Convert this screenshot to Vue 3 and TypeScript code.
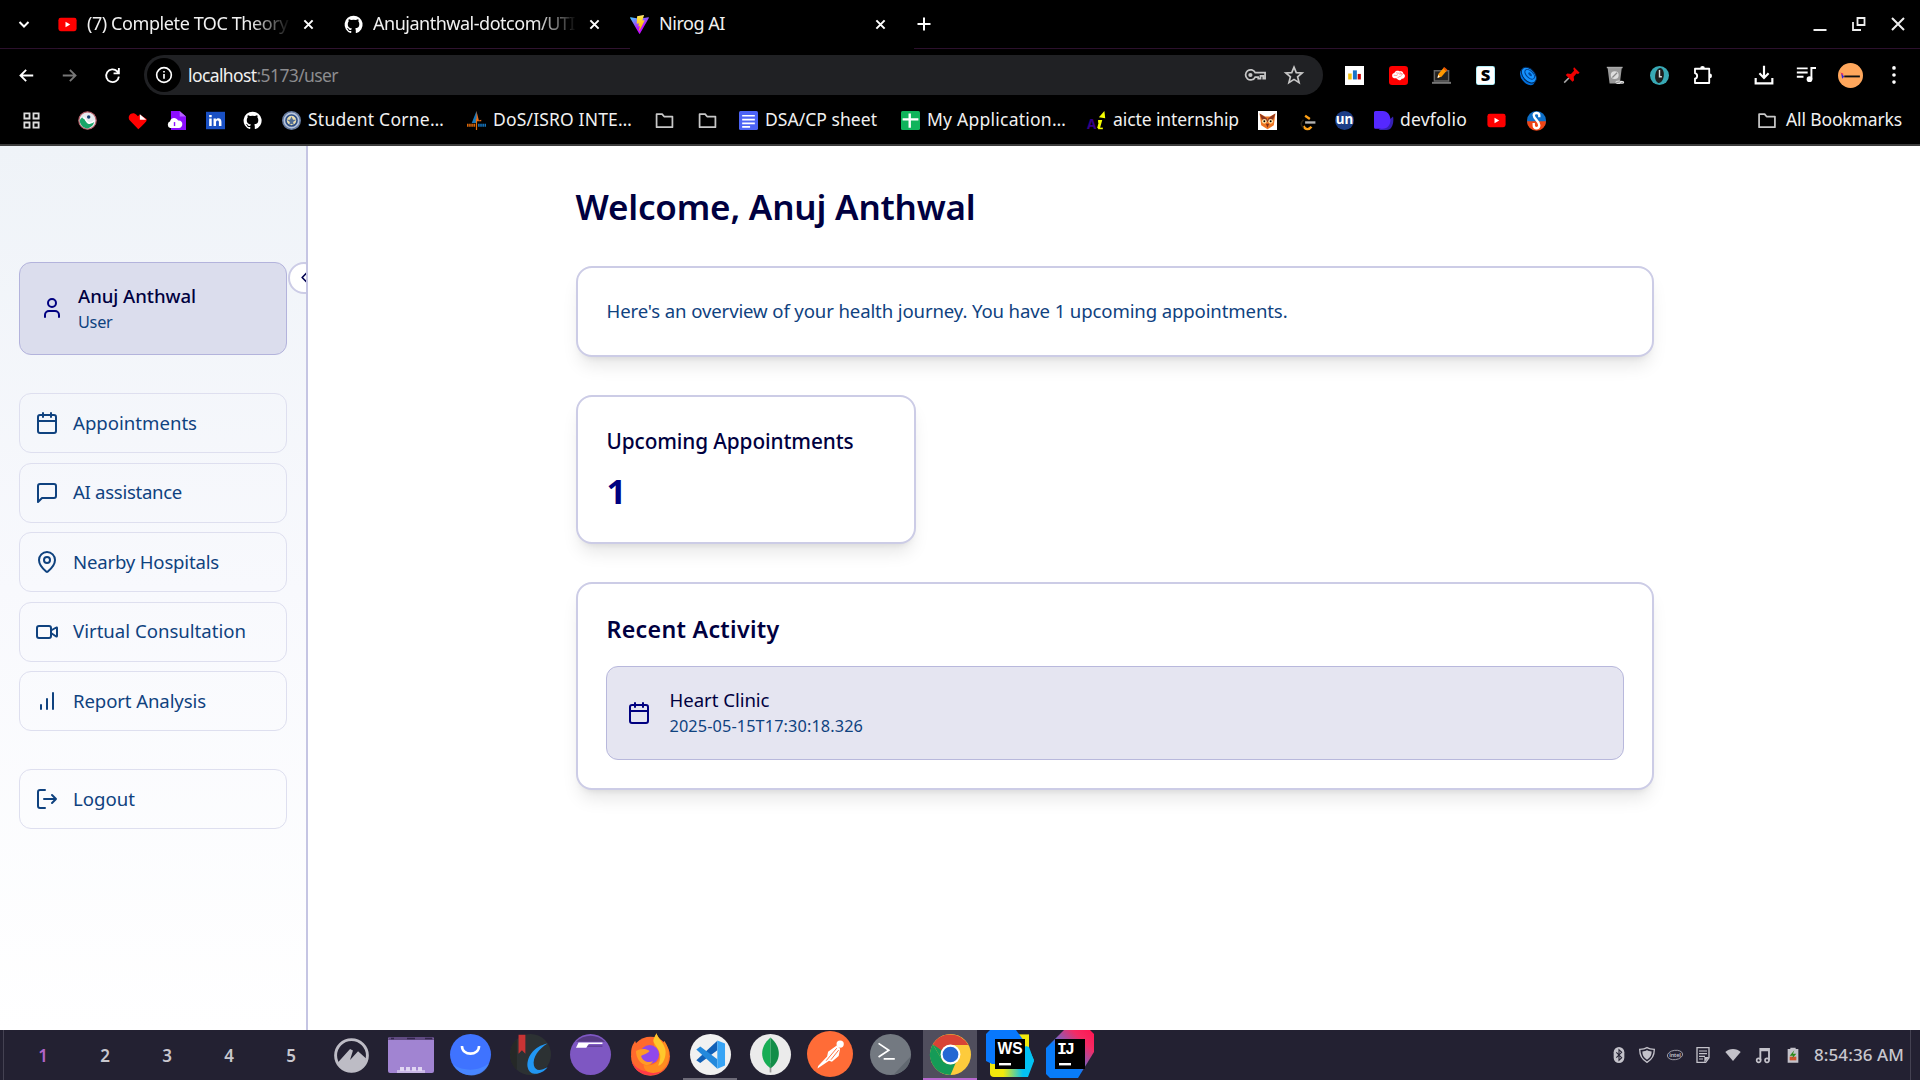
<script setup lang="ts">
interface Bookmark { icon: string; width: number; text?: string; fit?: number }
interface NavItem { icon: string; text: string; fit: number }

// Spreads the letters of a label over a given width in pixels.
const vFit = {
  mounted(el: HTMLElement, binding: { value: number }) {
    const count = (el.textContent || '').length
    const natural = el.getBoundingClientRect().width
    if (count > 0) el.style.letterSpacing = `${(binding.value - natural) / count}px`
  },
}

const github = '<path fill="#fff" d="M12 .8A11.3 11.3 0 0 0 8.4 22.800c.6.1.8-.25.8-.55v-2.100c-3.200.7-3.850-1.350-3.850-1.350-.5-1.300-1.250-1.650-1.250-1.650-1.050-.7.080-.7.080-.7 1.150.08 1.750 1.180 1.750 1.180 1 1.750 2.700 1.250 3.350.95.1-.75.4-1.250.7-1.530-2.550-.3-5.200-1.280-5.200-5.650 0-1.250.45-2.280 1.180-3.080-.12-.3-.5-1.450.1-3.020 0 0 .97-.3 3.150 1.170a11 11 0 0 1 5.700 0c2.200-1.470 3.150-1.170 3.150-1.170.6 1.570.22 2.720.1 3.020.73.8 1.180 1.830 1.180 3.080 0 4.380-2.680 5.350-5.220 5.630.42.35.78 1.050.78 2.120v3.150c0 .3.2.67.8.55A11.300 11.300 0 0 0 12 .8z"/>'
const youtube = '<rect x=".5" y="3.500" width="23" height="17" rx="3" fill="#f00"/><path fill="#fff" d="M9.500 8.500v7l6-3.500z"/>'
const folder = '<path fill="none" stroke="#c7c7c7" stroke-width="2.200" stroke-linejoin="round" d="M2 4h7l2.500 3H22v13.500H2z"/>'

const icons: Record<string, string> = {
  github, youtube, folder,
  vite: '<defs><linearGradient id="va" x1="0" y1="0" x2=".6" y2="1"><stop stop-color="#41d1ff"/><stop offset=".7" stop-color="#bd10fe"/></linearGradient><linearGradient id="vb" x1="0" y1="0" x2="0" y2="1"><stop stop-color="#ffea83"/><stop offset=".2" stop-color="#ffdd35"/><stop offset="1" stop-color="#ffa800"/></linearGradient></defs><path fill="url(#va)" d="M23.800 3.700 12.700 23.400a.7.7 0 0 1-1.200 0L.2 3.700c-.3-.5.2-1 .7-.9L12 4.700l11.100-2c.5-.1 1 .5.700 1z"/><path fill="url(#vb)" d="M17.200 0 9 1.700l-.5 8.700c0 .3.2.5.5.5l2.300-.5-.7 3.500c0 .3.2.6.5.5l1.400-.4-1.100 5.500c0 .4.400.600.600.300L18.500 7c.1-.3-.1-.6-.5-.5l-2.400.4L17.600.5c.1-.3-.1-.5-.4-.5z"/>',
  back: '<path d="M21.500 12H4M11.500 4 3.500 12l8 8" fill="none" stroke="#fff" stroke-width="2.600"/>',
  forward: '<path d="M2.500 12H20M12.500 4l8 8-8 8" fill="none" stroke="#777" stroke-width="2.600"/>',
  reload: '<path d="M21 13.500a9 9 0 1 1-2.500-7.500L21 8.500M21 1.500v7.500h-7.500" fill="none" stroke="#fff" stroke-width="2.600"/>',
  info: '<circle cx="12" cy="12" r="9.800" fill="none" stroke="#fff" stroke-width="2.200"/><path d="M12 10.500v6.500M12 6.500v2.300" stroke="#fff" stroke-width="2.200"/>',
  key: '<path d="M12.200 9.500H23V16h-2v-3h-3v3h-2.500v-1.800h-3.300A5.500 5.500 0 1 1 12.200 9.500z" fill="none" stroke="#c7c7c7" stroke-width="1.900"/><circle cx="7" cy="12" r="2.300" fill="#c7c7c7"/>',
  star: '<path d="m12 2.500 2.700 6.600 7.100.5-5.500 4.500 1.800 7L12 17.300l-6.100 3.800 1.800-7-5.500-4.500 7.100-.5z" fill="none" stroke="#c7c7c7" stroke-width="2"/>',
  chart: '<path fill="#fff" d="M0 0h24v24H0z"/><path fill="#f4c20d" d="M4 9.500h4.500V17H4z"/><path fill="#1a73c8" d="M10 5.500h5V17h-5z"/><path fill="#c00" d="M16 10h4v7h-4z"/>',
  brain: '<rect width="24" height="24" rx="4" fill="#f00"/><path fill="#fff" d="M4 13c-.5-3 1.500-4 3-4.500 1-2.500 4-3 6-2 3-.5 5 1 5 3 2 1 3 3 1.500 5-1 1.500-2.500 1.500-3.500 1.500-1 2-3 2.500-4.500 1.500-1.500-1-1-2-3-2-2 .5-4-.5-4.500-2.500z"/><path fill="none" stroke="#f55" stroke-width=".8" d="M6 12c2-1 3 1 5-1m-2-3c1 2 3 0 4 2m1-3c-1 2 2 2 3 4m-6 4c1-2 3-1 5-3m-3-2 4 0"/>',
  laptop: '<path fill="#222" stroke="#666" stroke-width="1.800" d="M3 6h18v13H3z"/><path fill="#777" d="M0 20h24v2.500H0z"/><path fill="#ff9800" d="m7 15 1-5 7-8 4 3.500-7 8z"/><path fill="#fff" d="m7 15 .7-3.500 2.300 2z"/><path fill="#e65100" d="m14 3 1.500-1.700 4 3.500L18 6.500z"/>',
  slant: '<rect width="24" height="24" rx="3" fill="#9be9f5"/><rect x="1" y="1" width="22" height="22" rx="2" fill="#fff"/><text x="12" y="19.500" text-anchor="middle" font-family="Noto Sans" font-weight="900" font-size="21" fill="#000">S</text>',
  disc: '<ellipse cx="11" cy="13.500" rx="8" ry="12" transform="rotate(-38 11 13.500)" fill="#006edb"/><ellipse cx="12.500" cy="11.500" rx="7.500" ry="11.500" transform="rotate(-42 12.500 11.500)" fill="#1493ff" stroke="#02244f" stroke-width="1.200"/><ellipse cx="13.500" cy="10.500" rx="4.200" ry="7.500" transform="rotate(-45 13.500 10.500)" fill="none" stroke="#02408f" stroke-width="1.300"/><ellipse cx="14" cy="10.500" rx="1.500" ry="3" transform="rotate(-45 14 10.500)" fill="#014a9f"/>',
  pin: '<path stroke="#aaa" stroke-width="1.800" d="m1.500 21 6-6"/><path fill="#f00000" d="m14 1.500 7 7-2 1.500-2-.5-3.500 4 .5 4.500-2 2L3.500 11.500l2-2 4.500.5 4-4-1-2.500z"/>',
  trash: '<path fill="#999" d="M2 2h18l-2.500 20h-13z"/><path fill="#aaa" d="M1 1h20v1.800H1z"/><circle cx="11" cy="11.500" r="5" fill="#ddd"/><path stroke="#888" stroke-width="1.500" d="m8 14.500 6-6"/><ellipse cx="16" cy="20.500" rx="4" ry="2.300" fill="#ddd"/><ellipse cx="20" cy="20.500" rx="3" ry="2" fill="#eee"/><path stroke="#777" d="m13 21 5-1m0 2 4-2"/>',
  clock: '<circle cx="12" cy="12" r="12" fill="#38a9b5"/><ellipse cx="12" cy="12" rx="5.500" ry="9.500" transform="rotate(8 12 12)" fill="#1c1c1c"/><path d="M12 5v8.500h3" stroke="#ddd" stroke-width="1.800" fill="none"/>',
  puzzle: '<path d="M2.500 3.500H20.500v18H2.500v-5.500a3.600 3.600 0 0 0 0-7z" fill="none" stroke="#fff" stroke-width="2.300" stroke-linejoin="round"/><path fill="#fff" d="M9 3a3 3 0 0 1 6 0zM21 9.500a3 3 0 0 1 0 6z"/>',
  download: '<path d="M12 1v14M6.500 10l5.500 5.500 5.500-5.500M2 15.500v6.500h20v-6.500" fill="none" stroke="#fff" stroke-width="2.600"/>',
  queue: '<path d="M1 4h13M1 9h13M1 14h8M18.500 17V3.500H24" fill="none" stroke="#fff" stroke-width="2.300"/><circle cx="16.200" cy="17" r="3.400" fill="#fff"/>',
  avatar: '<circle cx="12" cy="12" r="12" fill="#ffa75c"/><path fill="#e91e63" d="m2 9 3 1v2z"/><path fill="#3525d8" d="m3 10 3 3-2 2z"/><path fill="#111" d="M6 12h15v1.800H6z"/>',
  dots: '<g fill="#fff"><circle cx="12" cy="3.500" r="2.200"/><circle cx="12" cy="12" r="2.200"/><circle cx="12" cy="20.500" r="2.200"/></g>',
  apps: '<path d="M3 3h6.500v6.500H3zM14.500 3H21v6.500h-6.500zM3 14.500h6.500V21H3zM14.500 14.500H21V21h-6.500z" fill="none" stroke="#ddd" stroke-width="2.300"/>',
  wave: '<circle cx="12" cy="12" r="11" fill="#e6eaee" stroke="#b8606a" stroke-width="1.500"/><path fill="#18a568" d="M2 12c3-5 5-5 7-1s5 5 11 3c0 4-4 7-8 8-5 0-9-4-10-10z"/><path d="M6 9c3-2 4 5 7 6 3 1 5 0 8-3" stroke="#fff" stroke-width="2" fill="none"/><circle cx="13.500" cy="7.500" r="2.200" fill="#123a6a"/>',
  heart: '<path fill="#f00" d="M13 23 1.500 11C-1 5 6 0 11 5l1.500 1.500L15 4.500 23.500 10c.5 3-1 4-10.500 13z"/><path fill="#fff" d="M15 4v7h8z"/>',
  cloud: '<path fill="#8d0dff" d="M5 0h11l8 7v17H5z"/><path fill="#000" d="M16 0h8v7z"/><path fill="#b662ff" d="M16 0v7h8z"/><path fill="#fff" d="M4 21.500a4.500 4.500 0 0 1 0-8.500c0-5 8-6 10-1 7-1 7 9 1 9.500z"/><path stroke="#8d0dff" stroke-width="1.800" d="M9.500 14v5"/>',
  linkedin: '<path fill="#1950c4" d="M0 1h24v22H0z"/><path fill="#fff" d="M4 9.500h3.200V19H4zM4 5h3.200v3H4zM9.500 9.500h3V11c2-3 7-2 7 2.500V19h-3.200v-5c0-3-3.600-2.500-3.600 0v5H9.500z"/>',
  emblem: '<circle cx="12" cy="12" r="11" fill="#b8c5dc" stroke="#667b9f" stroke-width="2"/><circle cx="12" cy="12" r="7" fill="#e8dcae" stroke="#294b83" stroke-width="2"/><path fill="#506c94" d="m12 7 2 4h4l-4 3 1 4-3-2-3 2 1-4-4-3h4z"/>',
  isro: '<path fill="#ed6d16" d="m12 0 3 12 3-1v2H8l2-1z"/><path fill="#1976b8" d="M12 0v15H6z"/><path stroke="#d8680c" stroke-width="3.500" stroke-dasharray="2 .7" d="M0 18h11"/><path stroke="#1573bb" stroke-width="3.500" stroke-dasharray="2 .7" d="M14 18h10"/><path stroke="#e8700c" stroke-width="1.500" d="M12 10v14"/>',
  docs: '<rect width="24" height="24" rx="2" fill="#4c63f5"/><path d="M4 6h16M4 11h16M4 15.500h16M4 20h10" stroke="#fff" stroke-width="2.200"/>',
  sheet: '<rect width="24" height="24" rx="2" fill="#10b45b"/><path d="M11 3v18M2 10.500h20" stroke="#fff" stroke-width="3"/>',
  aicte: '<text x="0" y="23" font-family="Noto Sans" font-weight="700" font-size="17" fill="#340087">A</text><path d="m14.500 22 2.500-9h-3" fill="none" stroke="#f6ff00" stroke-width="3.500"/><path d="M14 22h6" stroke="#f6ff00" stroke-width="2"/><path fill="#f6ff00" d="m15 8 7-8 1 9z"/>',
  owl: '<path fill="#fff" d="M0 0h24v24H0z"/><path fill="#ef7623" d="m2 3 7 4h6l7-4-2 15-8 5-8-5z"/><path fill="#8c3720" d="m2 3 9 6 1 3 1-3 9-6-3 8-7 3-7-3z"/><circle cx="8" cy="13" r="3" fill="#ffe0a0"/><circle cx="16" cy="13" r="3" fill="#ffe0a0"/><circle cx="8" cy="13" r="1.200"/><circle cx="16" cy="13" r="1.200"/><path fill="#7a2c18" d="m10 16 2 5 2-5z"/>',
  leet: '<path d="m9 6 6 4M7 19c2 5 7 5 10 1" fill="none" stroke="#ffa116" stroke-width="3"/><path d="M9 14.500h13" stroke="#b3b3b3" stroke-width="3"/><path d="M7 11c-4 4-4 7 0 10" fill="none" stroke="#2b2114" stroke-width="2"/>',
  un: '<circle cx="12" cy="12" r="12" fill="#1d3d86"/><text x="12" y="16.500" text-anchor="middle" font-family="Noto Sans" font-weight="700" font-size="17" fill="#fff">un</text>',
  devfolio: '<path fill="#3520b5" d="M6 24h10c9 0 9-14 8-17z"/><path fill="#5528ff" d="M2 0h9c13 0 13 22.500 0 22.500H2q-2 0-2-2V2q0-2 2-2z"/>',
  swirl: '<circle cx="12" cy="12" r="12" fill="#0d6fc8"/><path fill="#f04414" d="M0 13h24a12 12 0 0 1-24 0z"/><path fill="none" stroke="#fff" stroke-width="3" d="M15.500 8V5.500c0-4-7-4-7 0C8.500 10 15.500 12 15.500 18c0 5-7 5-7 0v-3"/>',
  user: '<path d="M19 21v-2a4 4 0 0 0-4-4H9a4 4 0 0 0-4 4v2"/><circle cx="12" cy="7" r="4"/>',
  calendar: '<path d="M8 2v4M16 2v4M3 10h18"/><rect x="3" y="4" width="18" height="18" rx="2"/>',
  chat: '<path d="M21 15a2 2 0 0 1-2 2H7l-4 4V5a2 2 0 0 1 2-2h14a2 2 0 0 1 2 2z"/>',
  mapPin: '<path d="M20 10c0 5-5.500 10.200-7.400 11.800a1 1 0 0 1-1.200 0C9.500 20.200 4 15 4 10a8 8 0 0 1 16 0"/><circle cx="12" cy="10" r="3"/>',
  video: '<path d="m16 13 5.200 3.500a.5.500 0 0 0 .8-.4V7.900a.5.500 0 0 0-.8-.4L16 10.500"/><rect x="2" y="6" width="14" height="12" rx="2"/>',
  bars: '<path d="M12 20V10M18 20V4M6 20v-4"/>',
  logout: '<path d="M10 21H5a2 2 0 0 1-2-2V5a2 2 0 0 1 2-2h5M17 16l4-4-4-4M21 12H9"/>',
  chevron: '<path d="m15 18-6-6 6-6"/>',
  mountain: '<circle cx="12" cy="12" r="10.900" fill="none" stroke="#bdbcc5" stroke-width="2"/><path fill="#bdbcc5" d="M2.500 17 11 7.500l2 1L11 15l5.500-6 5.500 5c-2 12-16 12-19.500 3z"/>',
  bag: '<circle cx="12" cy="12" r="12" fill="#3f73ff"/><path fill="#4b8bff" d="M2 18c6 4 15 4 21-1-3 9-16 10-21 1z" opacity=".8"/><path d="M7 7c0 6 10 6 10 0" fill="none" stroke="#fff" stroke-width="1.500"/>',
  foliate: '<circle cx="12" cy="12" r="12" fill="#2c3133"/><path fill="#252827" d="M0 12A12 12 0 0 1 4 3v18a12 12 0 0 1-4-9z"/><path fill="#c93434" d="M5 .5h4v11l-2-2-2 2z"/><path fill="#2196f3" d="M22 5.500C14 7 9 14 10.500 20c1.500 5 8 4 11.500-.5-4 2-7 2.500-8-1-1-5 3-10 8-13z"/>',
  files: '<circle cx="12" cy="12" r="12" fill="#7e57c2"/><path fill="#563a82" d="M3.500 4.500h17a12 12 0 0 0-17 0z"/><path fill="#fff" d="M5 5h14v.8h-8L9.500 8H3.500z"/><path fill="#5b3d8d" d="M10.500 6.700H19v.7h-9z"/>',
  firefox: '<circle cx="12" cy="13" r="11.400" fill="#ff6a2d"/><path fill="#ff3a47" d="M1 16c4 7 12 8 20 2-2 8-17 9-20-2z"/><path fill="#ff6a2d" d="M1 13C0 8 2 6 3 4l1 3 3-3v4l4 1z"/><path fill="#ff8c20" d="M14 6c-1-3 1-5 1.500-6.500 1 3 3 4 4 6L20 4c4 5 4 14-2 18-6 2-10 0-10-4 2 1 10 0 9-5-1-4-3-4-3-7z"/><path fill="#ffc72c" d="M14 5c-1-2 1-4 1.500-5.500 1 4 7 7 5 14-1 4-3 5-4 5 3-7 0-9-2.500-13.500z"/><circle cx="11.500" cy="12" r="5.500" fill="#9048ea"/><path fill="#ff9b25" d="M3.500 10c2-1 5-2 8 0-2 2-4 2-5 3 1 3 4 4 7 3-3 5-10 1-10-6z"/>',
  vscode: '<circle cx="12" cy="12" r="12" fill="#f1f1f1"/><path fill="#1160b7" d="M16 4v5.500L6 17l-2.300-1.700z"/><path fill="#2489dc" d="M3.700 9 6 7.300l10 7.500v5.500z"/><path fill="#38a4f5" d="M16 3.800 20.500 5.500v13L16 20.300z"/>',
  mongo: '<circle cx="12" cy="12" r="12" fill="#ebebeb"/><path d="M12 17v5.500" stroke="#999"/><path fill="#17ad55" d="M12 2c-7 6-6 14 0 18z"/><path fill="#128d48" d="M12 2c7 6 6 14 0 18z"/>',
  postman: '<circle cx="12" cy="12" r="12" fill="#ff6c37"/><circle cx="17.300" cy="6.800" r="1.900" fill="#fff"/><path fill="#fff" d="m15.500 7.500 1.800 1.800-.8 3.700-3.500 3-1.500-.5-6 4 .3-1.200 4.700-5 .5-2.500z"/><path d="m15.500 9-5.500 6.500M16.500 10l-4 5" stroke="#ff6c37" stroke-width=".5"/>',
  terminal: '<circle cx="12" cy="12" r="12" fill="#737981"/><path fill="#616870" d="m14 23.500 9.500-10c0 6-4 9-9.500 10z"/><path d="m5 5.500 6 4-6 4M8 14.500h6.500" fill="none" stroke="#fff" stroke-width="1"/>',
  chrome: '<circle cx="12" cy="12" r="12" fill="#fdcb3c"/><path fill="#159b57" d="M1.600 6 7 15c1.500 2.600 5 3.500 8 2l-3 7A12 12 0 0 1 1.600 6z"/><path fill="#d94335" d="M1.600 6a12 12 0 0 1 20.800 0.500H12a6 6 0 0 0-5.500 4.500z"/><path fill="#159b57" d="m1.600 6 5.400 9-.3-5.500z"/><circle cx="12" cy="12" r="5.800" fill="#fff"/><circle cx="12" cy="12" r="4.600" fill="#2467d3"/>',
  webstorm: '<defs><linearGradient id="ws" x1="0" y1="0" x2="1" y2="0"><stop offset=".3" stop-color="#f2e90c"/><stop offset=".75" stop-color="#03c2f4"/></linearGradient></defs><path fill="#f2e90c" d="M16 2.200h5.500V12H16z"/><path fill="url(#ws)" d="M2 16h8l10-8 1.500.5 2.500 7-3 8H4q-2 0-2-2z"/><path fill="#03c2f4" d="M19 8.500h2l3 6.500-2.500 6L13 19z"/><path fill="#0878fd" d="M2 0h13l4 5.500L10 17H3l-3-1.500V2z"/><path d="M4.500 4.500h15v15h-15z"/><text x="12" y="12.200" text-anchor="middle" font-family="Liberation Sans" font-weight="700" font-size="7.800" fill="#fff">WS</text><path fill="#fff" d="M6.500 16.500h6v1.200h-6z"/>',
  intellij: '<defs><linearGradient id="ij" x1="1" y1="0" x2="0" y2="1"><stop stop-color="#ff1450"/><stop offset=".22" stop-color="#f52a63"/><stop offset=".46" stop-color="#855cb9"/><stop offset=".58" stop-color="#087cfa"/></linearGradient></defs><path fill="url(#ij)" d="M9 0h13l2 2v9l-8 13H2l-2-2V9z"/><path d="M4.500 4.500h15v15h-15z"/><text x="9.500" y="12.200" text-anchor="middle" font-family="Liberation Mono" font-weight="700" font-size="8.300" fill="#fff" letter-spacing="-1">IJ</text><path fill="#fff" d="M6.500 16.500h6v1.200h-6z"/>',
  bluetooth: '<rect x="4" y="0" width="16" height="24" rx="8" fill="#c3c2ca"/><path d="m8 8 8 8-4 4V4l4 4-8 8" fill="none" stroke="#232132" stroke-width="1.600"/>',
  shield: '<path d="M12 1c3 2 6.500 2.500 11 2.500 0 9-2.500 15-11 19.500C3.500 18.500 1 12.500 1 3.500 5.500 3.500 9 3 12 1z" fill="none" stroke="#c3c2ca" stroke-width="2"/><path fill="#c3c2ca" d="M12 4.500c2 1.500 4 2 7 2.200 0 5.500-2 9-7 12.300-5-3.300-7-6.800-7-12.300 3-.2 5-.7 7-2.200z"/>',
  intel: '<ellipse cx="12" cy="12" rx="11.500" ry="7" transform="rotate(-8 12 12)" fill="none" stroke="#a9a8b0" stroke-width="1.300"/><text x="12" y="15" text-anchor="middle" font-family="Noto Sans" font-weight="600" font-size="8.500" letter-spacing="-.3" fill="#c3c2ca">intel</text>',
  note: '<path d="M3 1h18v15l-5 7H3z" fill="none" stroke="#c3c2ca" stroke-width="2"/><path d="M6 6h12M6 10h12M6 14h9M6 18h6" stroke="#c3c2ca" stroke-width="1.800"/><path fill="#c3c2ca" d="M14 15h7l-7 8z"/>',
  wifi: '<path fill="#c3c2ca" d="M12 21 .5 7.500c6-6 17-6 23 0z"/>',
  music: '<path d="M8 20V3h13v17M8 5h13" fill="none" stroke="#c3c2ca" stroke-width="2.800"/><circle cx="5.500" cy="20" r="3" fill="none" stroke="#c3c2ca" stroke-width="2.500"/><circle cx="18" cy="20" r="3" fill="none" stroke="#c3c2ca" stroke-width="2.500"/>',
  battery: '<path fill="#c3c2ca" d="M4 3h4V1h8v2h4v20.500H4z"/><path fill="#d2552c" d="M7 14.500h10V20H7z"/><path fill="#2c8a1a" d="m14 5-7 8h5l-1 4 6-7h-5z"/>',
}

const extensions = ['chart', 'brain', 'laptop', 'slant', 'disc', 'pin', 'trash', 'clock', 'puzzle']

const bookmarks: Bookmark[] = [
  { icon: 'apps', width: 56 },
  { icon: 'wave', width: 50 },
  { icon: 'heart', width: 39 },
  { icon: 'cloud', width: 39 },
  { icon: 'linkedin', width: 37 },
  { icon: 'github', width: 39 },
  { icon: 'emblem', width: 185, text: 'Student Corne…', fit: 136 },
  { icon: 'isro', width: 188, text: 'DoS/ISRO INTE…', fit: 139 },
  { icon: 'folder', width: 43 },
  { icon: 'folder', width: 41 },
  { icon: 'docs', width: 162, text: 'DSA/CP sheet', fit: 112 },
  { icon: 'sheet', width: 186, text: 'My Application…', fit: 139 },
  { icon: 'aicte', width: 171, text: 'aicte internship', fit: 126 },
  { icon: 'owl', width: 40 },
  { icon: 'leet', width: 37 },
  { icon: 'un', width: 39 },
  { icon: 'devfolio', width: 113, text: 'devfolio', fit: 67 },
  { icon: 'youtube', width: 40 },
  { icon: 'swirl', width: 20 },
]

const nav: NavItem[] = [
  { icon: 'calendar', text: 'Appointments', fit: 124 },
  { icon: 'chat', text: 'AI assistance', fit: 109 },
  { icon: 'mapPin', text: 'Nearby Hospitals', fit: 146 },
  { icon: 'video', text: 'Virtual Consultation', fit: 173 },
  { icon: 'bars', text: 'Report Analysis', fit: 133 },
]

const dock = ['bag', 'foliate', 'files', 'firefox', 'vscode', 'mongo', 'postman', 'terminal', 'chrome', 'webstorm', 'intellij']
const tray = [
  { icon: 'bluetooth', width: 28 },
  { icon: 'shield', width: 28 },
  { icon: 'intel', width: 28 },
  { icon: 'note', width: 30 },
  { icon: 'wifi', width: 30 },
  { icon: 'music', width: 30 },
  { icon: 'battery', width: 29 },
]
</script>

<template>
  <div class="screen">
    <header class="browser">
      <div class="tabs">
        <div class="tab-menu">
          <svg viewBox="0 0 12 12" width="12" height="12"><path d="m1.500 4 4.500 4.500L10.500 4" fill="none" stroke="#fff" stroke-width="2" /></svg>
        </div>
        <div class="tab">
          <svg class="fav" viewBox="0 0 24 24" v-html="icons.youtube"></svg>
          <span class="tab-title fade"><span v-fit="201">(7) Complete TOC Theory</span></span>
          <svg class="close" viewBox="0 0 12 12"><path d="m1.500 1.500 9 9m0-9-9 9" /></svg>
        </div>
        <div class="tab">
          <svg class="fav" viewBox="0 0 24 24" v-html="icons.github"></svg>
          <span class="tab-title fade"><span v-fit="202">Anujanthwal-dotcom/UTI</span></span>
          <svg class="close" viewBox="0 0 12 12"><path d="m1.500 1.500 9 9m0-9-9 9" /></svg>
        </div>
        <div class="tab active">
          <svg class="fav" viewBox="0 0 24 24" v-html="icons.vite"></svg>
          <span class="tab-title"><span v-fit="66">Nirog AI</span></span>
          <svg class="close" viewBox="0 0 12 12"><path d="m1.500 1.500 9 9m0-9-9 9" /></svg>
        </div>
        <div class="tabs-rest">
          <svg class="plus" viewBox="0 0 14 14"><path d="M7 .5v13M.5 7h13" stroke="#fff" stroke-width="2" /></svg>
          <div class="window-buttons">
            <svg viewBox="0 0 16 16"><path d="M1.500 14h13" stroke="#eee" stroke-width="2" /></svg>
            <svg viewBox="0 0 16 16"><path d="M6.500 2h7v7h-7zM2 6v8h8" fill="none" stroke="#eee" stroke-width="1.800" /></svg>
            <svg viewBox="0 0 16 16"><path d="m2 2 12 12M14 2 2 14" stroke="#eee" stroke-width="2" /></svg>
          </div>
        </div>
      </div>

      <div class="toolbar">
        <div class="nav-buttons">
          <svg viewBox="0 0 24 24" v-html="icons.back"></svg>
          <svg viewBox="0 0 24 24" v-html="icons.forward"></svg>
          <svg viewBox="0 0 24 24" v-html="icons.reload"></svg>
        </div>
        <div class="omnibox">
          <span class="site-info"><svg viewBox="0 0 24 24" v-html="icons.info"></svg></span>
          <span class="url"><span v-fit="150">localhost<i>:5173/user</i></span></span>
          <svg class="key" viewBox="0 0 24 24" v-html="icons.key"></svg>
          <svg class="star" viewBox="0 0 24 24" v-html="icons.star"></svg>
        </div>
        <div class="extensions">
          <svg v-for="name in extensions" :key="name" viewBox="0 0 24 24" v-html="icons[name]"></svg>
        </div>
        <div class="browser-actions">
          <svg viewBox="0 0 24 24" v-html="icons.download"></svg>
          <svg viewBox="0 0 24 24" v-html="icons.queue"></svg>
          <svg class="avatar" viewBox="0 0 24 24" v-html="icons.avatar"></svg>
          <svg viewBox="0 0 24 24" v-html="icons.dots"></svg>
        </div>
      </div>

      <div class="bookmarks">
        <div v-for="(b, i) in bookmarks" :key="i" class="bookmark" :style="{ width: b.width + 'px' }">
          <svg viewBox="0 0 24 24" v-html="icons[b.icon]"></svg>
          <span v-if="b.text" v-fit="b.fit">{{ b.text }}</span>
        </div>
        <div class="bookmark all">
          <svg viewBox="0 0 24 24" v-html="icons.folder"></svg>
          <span v-fit="116">All Bookmarks</span>
        </div>
      </div>
    </header>

    <div class="page">
      <aside class="sidebar">
        <div class="profile">
          <svg class="line-icon" viewBox="0 0 24 24" v-html="icons.user"></svg>
          <div class="profile-text">
            <span class="name"><span v-fit="118">Anuj Anthwal</span></span>
            <span class="role"><span v-fit="34.5">User</span></span>
          </div>
        </div>
        <button class="collapse"><svg class="line-icon" viewBox="0 0 24 24" v-html="icons.chevron"></svg></button>
        <nav class="nav">
          <a v-for="item in nav" :key="item.text" class="nav-item">
            <svg class="line-icon" viewBox="0 0 24 24" v-html="icons[item.icon]"></svg>
            <span v-fit="item.fit">{{ item.text }}</span>
          </a>
        </nav>
        <a class="nav-item">
          <svg class="line-icon" viewBox="0 0 24 24" v-html="icons.logout"></svg>
          <span v-fit="62">Logout</span>
        </a>
      </aside>

      <main class="main">
        <div class="content">
          <h1><span v-fit="400">Welcome, Anuj Anthwal</span></h1>
          <section class="card overview">
            <span v-fit="681">Here's an overview of your health journey. You have 1 upcoming appointments.</span>
          </section>
          <section class="card stat">
            <h3><span v-fit="247">Upcoming Appointments</span></h3>
            <p>1</p>
          </section>
          <section class="card recent">
            <h2><span v-fit="173">Recent Activity</span></h2>
            <div class="activity">
              <svg class="line-icon" viewBox="0 0 24 24" v-html="icons.calendar"></svg>
              <div class="activity-text">
                <span class="title"><span v-fit="100">Heart Clinic</span></span>
                <span class="date"><span v-fit="193.5">2025-05-15T17:30:18.326</span></span>
              </div>
            </div>
          </section>
        </div>
      </main>
    </div>

    <footer class="taskbar">
      <div class="workspaces">
        <span v-for="n in 5" :key="n" :class="{ current: n === 1 }">{{ n }}</span>
      </div>
      <div class="launcher"><svg viewBox="0 0 24 24" v-html="icons.mountain"></svg></div>
      <div class="desktop">
        <svg viewBox="0 0 46 36" width="46" height="36">
          <rect width="46" height="36" rx="2" fill="#a184d2" />
          <path fill="#604a82" d="M1 0h44l1 3H0z" />
          <path stroke="#33264b" stroke-width="1.500" d="M3 1.500h3M19 1.500h8M37 1.500h7" />
          <path fill="#c9b8e6" d="M9 33h28v3H9z" />
          <path stroke="#e0d5f2" stroke-width="4" stroke-dasharray="4 2" d="M12 32h23" />
        </svg>
      </div>
      <div class="dock">
        <div v-for="name in dock" :key="name" class="app" :class="name">
          <svg viewBox="0 0 24 24" v-html="icons[name]"></svg>
        </div>
      </div>
      <div class="tray">
        <div v-for="t in tray" :key="t.icon" class="tray-icon" :style="{ width: t.width + 'px' }">
          <svg viewBox="0 0 24 24" v-html="icons[t.icon]"></svg>
        </div>
        <div class="clock"><span v-fit="90">8:54:36 AM</span></div>
      </div>
    </footer>
  </div>
</template>

<style>
body { margin: 0; overflow: hidden; }
</style>

<style scoped>
* { box-sizing: border-box; }
.screen { width: 1920px; height: 1080px; display: flex; flex-direction: column; background: #fff; overflow: hidden; font-family: "Noto Sans", "Open Sans", sans-serif; }
svg { display: block; flex: none; overflow: visible; }
span { white-space: pre; }
h1, h2, h3, p { margin: 0; }

.browser { height: 146px; flex: none; background: #000; border-bottom: 2px solid #3c3c3c; color: #f1f1f1; font-size: 18px; }
.tabs { display: flex; height: 49px; }
.tab-menu { width: 58px; border-bottom: 1px solid #2c102d; display: flex; align-items: center; padding-left: 18px; }
.tab { width: 286px; border-bottom: 1px solid #301330; display: flex; align-items: center; }
.fav { width: 19px; height: 19px; }
.tab-title { width: 204px; margin-left: 10px; overflow: hidden; line-height: 28px; padding-bottom: 2px; }
.tab-title span { display: inline-block; }
.fade { -webkit-mask-image: linear-gradient(90deg, #000 80%, transparent 100%); mask-image: linear-gradient(90deg, #000 80%, transparent 100%); }
.close { width: 11px; height: 11px; margin-left: 12px; }
.close path { stroke: #fff; stroke-width: 2.200; }
.tab.active { border-bottom-color: transparent; width: 284px; }
.tabs-rest { flex: 1; border-bottom: 1px solid #2c102d; display: flex; align-items: center; }
.plus { width: 14px; height: 14px; margin-left: 3px; }
.window-buttons { margin-left: auto; display: flex; gap: 23px; padding-right: 14px; }
.window-buttons svg { width: 16px; height: 16px; }

.toolbar { display: flex; height: 52px; align-items: center; }
.nav-buttons { width: 144px; display: flex; gap: 26px; padding-left: 18px; }
.nav-buttons svg { width: 17px; height: 17px; }
.omnibox { width: 1179px; height: 40px; border-radius: 20px; background: #202124; display: flex; align-items: center; }
.site-info { width: 34px; height: 34px; border-radius: 50%; background: #000; margin-left: 3px; display: flex; align-items: center; justify-content: center; }
.site-info svg { width: 18px; height: 18px; }
.url { margin-left: 7px; line-height: 30px; font-size: 17.500px; flex: 1; padding-bottom: 1px; }
.url span { display: inline-block; }
.url i { font-style: normal; color: #8c8c8f; }
.key { width: 22px; height: 22px; }
.star { width: 20px; height: 20px; margin: 0 19px 0 18px; }
.extensions { display: flex; gap: 24.500px; margin-left: 22px; }
.extensions svg { width: 19px; height: 19px; }
.browser-actions { display: flex; align-items: center; gap: 22px; margin-left: 42px; }
.browser-actions svg { width: 20px; height: 20px; }
.browser-actions .avatar { width: 25px; height: 25px; }
.browser-actions svg:last-child { margin-left: -1px; }

.bookmarks { display: flex; height: 41px; align-items: center; padding: 0 18px 2px 22px; }
.bookmark { flex: none; display: flex; align-items: center; line-height: 30px; font-size: 17.500px; }
.bookmark svg { width: 19px; height: 19px; margin-right: 7px; }
.bookmark span { padding-bottom: 3px; }
.bookmark.all { margin-left: auto; }
.bookmark.all svg { width: 20px; margin-right: 9px; }

.page { flex: 1; display: flex; min-height: 0; }
.line-icon { width: 24px; height: 24px; fill: none; stroke: currentColor; stroke-width: 2; stroke-linecap: round; stroke-linejoin: round; }
.sidebar { position: relative; width: 308px; padding: 116px 19px 0; border-right: 2px solid #c5c5e3; background: linear-gradient(180deg, #eff3f8 0%, #f8f9fd 50%, #fff 100%); overflow: hidden; }
.profile { width: 268px; height: 93px; border: 1px solid #b3b3dc; border-radius: 12px; background: #dbdded; display: flex; align-items: center; padding: 0 0 2px 20px; color: #000080; }
.profile-text { display: flex; flex-direction: column; margin-left: 14px; }
.name { color: #000040; font-weight: 500; font-size: 18.600px; line-height: 28px; }
.name span, .role span, .title span, .date span, h1 span, h2 span, h3 span { display: inline-block; }
.role { color: #0f427f; font-size: 16.300px; line-height: 24px; }
.collapse { position: absolute; left: 288px; top: 116px; width: 32px; height: 32px; border-radius: 50%; border: 2px solid #cccce6; background: #fff; color: #000050; padding: 0 0 1px; display: flex; align-items: center; justify-content: center; }
.collapse .line-icon { width: 19px; height: 19px; }
.nav { display: flex; flex-direction: column; gap: 9.500px; margin: 38px 0; }
.nav-item { width: 268px; height: 60px; border: 1px solid #dedfef; border-radius: 12px; display: flex; align-items: center; padding-left: 15px; gap: 14px; font-size: 18.600px; color: #0f427f; }
.nav-item span { padding-bottom: 2px; }

.main { flex: 1; display: flex; justify-content: center; }
.content { width: 1078px; margin-left: 1px; padding-top: 39px; }
h1 { font-size: 35px; font-weight: 600; line-height: 43px; color: #000040; margin-bottom: 38px; }
.card { border: 2px solid #cccce6; border-radius: 16px; background: #fff; box-shadow: 0 12px 18px -4px rgba(0, 0, 0, .1), 0 5px 7px -5px rgba(0, 0, 0, .1); padding: 0 29px; margin-bottom: 38px; }
.overview { height: 91px; display: flex; align-items: center; font-size: 18.600px; color: #0f427f; padding-bottom: 2px; }
.stat { width: 340px; height: 149px; padding-top: 31px; }
h3 { font-size: 20.800px; font-weight: 500; line-height: 26px; color: #000040; }
.stat p { margin-top: 15px; font-size: 34.500px; line-height: 43px; font-weight: 700; color: #000080; }
.recent { height: 208px; padding-top: 30px; padding-left: 28px; padding-right: 28px; }
h2 { font-size: 23.200px; font-weight: 600; line-height: 30px; color: #000040; margin: 0 0 22px 1px; }
.activity { height: 94px; border: 1px solid #b8b8dc; border-radius: 12px; background: #e5e5f1; display: flex; align-items: center; padding-left: 20px; color: #000080; }
.activity-text { display: flex; flex-direction: column; margin-left: 19px; padding-bottom: 2px; }
.title { font-size: 18.600px; line-height: 28px; color: #000040; }
.date { font-size: 16.300px; line-height: 24px; color: #0f427f; }

.taskbar { height: 50px; flex: none; background: #232132; display: flex; border-left: 3px solid #232132; color: #c8c7ce; }
.workspaces { display: flex; border-left: 1px solid #444252; padding-left: 8px; width: 318px; }
.workspaces span { width: 62px; flex: none; text-align: center; line-height: 51px; font-size: 17px; font-weight: 600; }
.workspaces .current { color: #b065c8; }
.launcher, .desktop { width: 60px; display: flex; align-items: center; justify-content: center; }
.desktop { width: 59px; }
.launcher svg { width: 35px; height: 35px; }
.dock { display: flex; }
.app { width: 60px; display: flex; align-items: center; justify-content: center; padding-bottom: 2px; }
.app svg { width: 41px; height: 41px; }
.app.postman svg { width: 46px; height: 46px; }
.app.webstorm svg, .app.intellij svg { width: 48px; height: 48px; }
.app.vscode, .app.chrome { width: 54px; margin: 0 3px; border-bottom: 2px solid #6d6b78; padding-bottom: 0; }
.app.chrome { background: #504e5d; border-bottom-color: #b768cf; }
.tray { margin-left: auto; display: flex; align-items: center; border-right: 1px solid #444252; margin-right: 9px; }
.tray-icon svg { width: 16px; height: 16px; }
.clock { width: 96px; line-height: 50px; font-size: 17px; font-weight: 500; }
.clock span { display: inline-block; }
</style>
